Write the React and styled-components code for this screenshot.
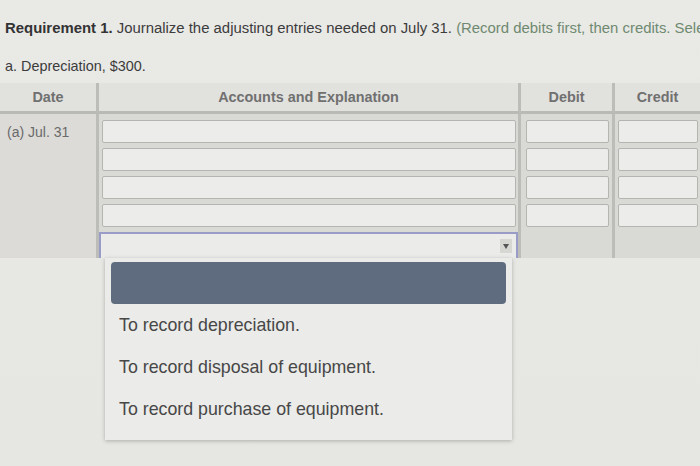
import React from 'react';
import styled, { createGlobalStyle } from 'styled-components';

const GlobalStyle = createGlobalStyle`
  html, body {
    margin: 0;
    padding: 0;
    background: #e7e7e4;
    font-family: "Liberation Sans", Arial, sans-serif;
  }
`;

const Page = styled.div`
  width: 700px;
  height: 466px;
  overflow: hidden;
  background: linear-gradient(180deg, #e9e9e6 0%, #e6e6e3 100%);
`;

const Prompt = styled.div`
  padding: 19px 0 0 5px;
  font-size: 14.9px;
  color: #3c3c3c;
  white-space: nowrap;
  overflow: hidden;
  line-height: 18px;
`;

const Strong = styled.b`
  font-weight: 700;
  color: #333;
`;

const Hint = styled.span`
  color: #6f8a70;
`;

const SubLine = styled.div`
  padding: 20px 0 0 5px;
  font-size: 14.4px;
  color: #3c3c3c;
  line-height: 18px;
`;

const Table = styled.div`
  margin-top: 8px;
  display: grid;
  grid-template-columns: 99px 422px 94px 1fr;
  background: #d9d9d6;
`;

const HeadCell = styled.div`
  height: 28px;
  display: flex;
  align-items: center;
  justify-content: center;
  font-size: 14.4px;
  font-weight: 700;
  color: #707070;
  background: #e1e1de;
  border-bottom: 3px solid #b9b9b6;
  border-right: ${(p) => (p.last ? 'none' : '3px solid #bcbcb9')};
`;

const BodyCell = styled.div`
  padding: 6px ${(p) => p.padR || 2}px 0 ${(p) => p.padL || 3}px;
  height: 138px;
  display: flex;
  flex-direction: column;
  gap: 5px;
  background: ${(p) => p.bg || '#d9d9d6'};
  border-right: ${(p) => (p.last ? 'none' : '3px solid #bcbcb9')};
  position: relative;
`;

const DateText = styled.div`
  font-size: 14px;
  color: #6a6a6a;
  padding: 4px 0 0 4px;
`;

const Field = styled.div`
  height: 21px;
  flex: none;
  background: #ececea;
  border: 1px solid #b4b4b1;
  border-radius: 2px;
`;

const Select = styled.div`
  height: 24px;
  flex: none;
  margin-left: -3px;
  margin-right: -2px;
  background: #ebebe9;
  border: 2px solid #9a9cc8;
  border-bottom: none;
  display: flex;
  align-items: center;
  justify-content: flex-end;
  padding-right: 4px;
  position: relative;
`;

const Arrow = styled.div`
  width: 12px;
  height: 14px;
  background: #d6d6d3;
  display: flex;
  align-items: center;
  justify-content: center;
  &::after {
    content: '';
    border-left: 3px solid transparent;
    border-right: 3px solid transparent;
    border-top: 5px solid #555;
  }
`;

const Menu = styled.div`
  position: absolute;
  top: 24px;
  left: 4px;
  width: 407px;
  height: 182px;
  box-sizing: border-box;
  padding: 4px 6px;
  background: #ebebe9;
  box-shadow: 0 1px 4px rgba(0, 0, 0, 0.25);
  z-index: 5;
`;

const Highlight = styled.div`
  height: 42px;
  border-radius: 4px;
  background: #5f6b7e;
`;

const Option = styled.div`
  height: 42px;
  display: flex;
  align-items: center;
  padding-left: 8px;
  font-size: 17.8px;
  color: #474747;
`;

const EmptyRow = styled.div`
  flex: none;
  height: 24px;
`;

const rows = [0, 1, 2, 3];

export default function App() {
  return (
    <Page>
      <GlobalStyle />
      <Prompt>
        <Strong>Requirement 1.</Strong> Journalize the adjusting entries needed on July 31.{' '}
        <Hint>(Record debits first, then credits. Sele</Hint>
      </Prompt>
      <SubLine>a. Depreciation, $300.</SubLine>
      <Table>
        <HeadCell>Date</HeadCell>
        <HeadCell>Accounts and Explanation</HeadCell>
        <HeadCell>Debit</HeadCell>
        <HeadCell last>Credit</HeadCell>

        <BodyCell bg="#dcdbd8">
          <DateText>(a) Jul. 31</DateText>
        </BodyCell>
        <BodyCell>
          {rows.map((r) => (
            <Field key={r} />
          ))}
          <Select>
            <Arrow />
            <Menu>
              <Highlight />
              <Option>To record depreciation.</Option>
              <Option>To record disposal of equipment.</Option>
              <Option>To record purchase of equipment.</Option>
            </Menu>
          </Select>
        </BodyCell>
        <BodyCell padL={5} padR={3}>
          {rows.map((r) => (
            <Field key={r} />
          ))}
          <EmptyRow />
        </BodyCell>
        <BodyCell padL={3} padR={0} last>
          {rows.map((r) => (
            <Field key={r} />
          ))}
          <EmptyRow />
        </BodyCell>
      </Table>
    </Page>
  );
}
